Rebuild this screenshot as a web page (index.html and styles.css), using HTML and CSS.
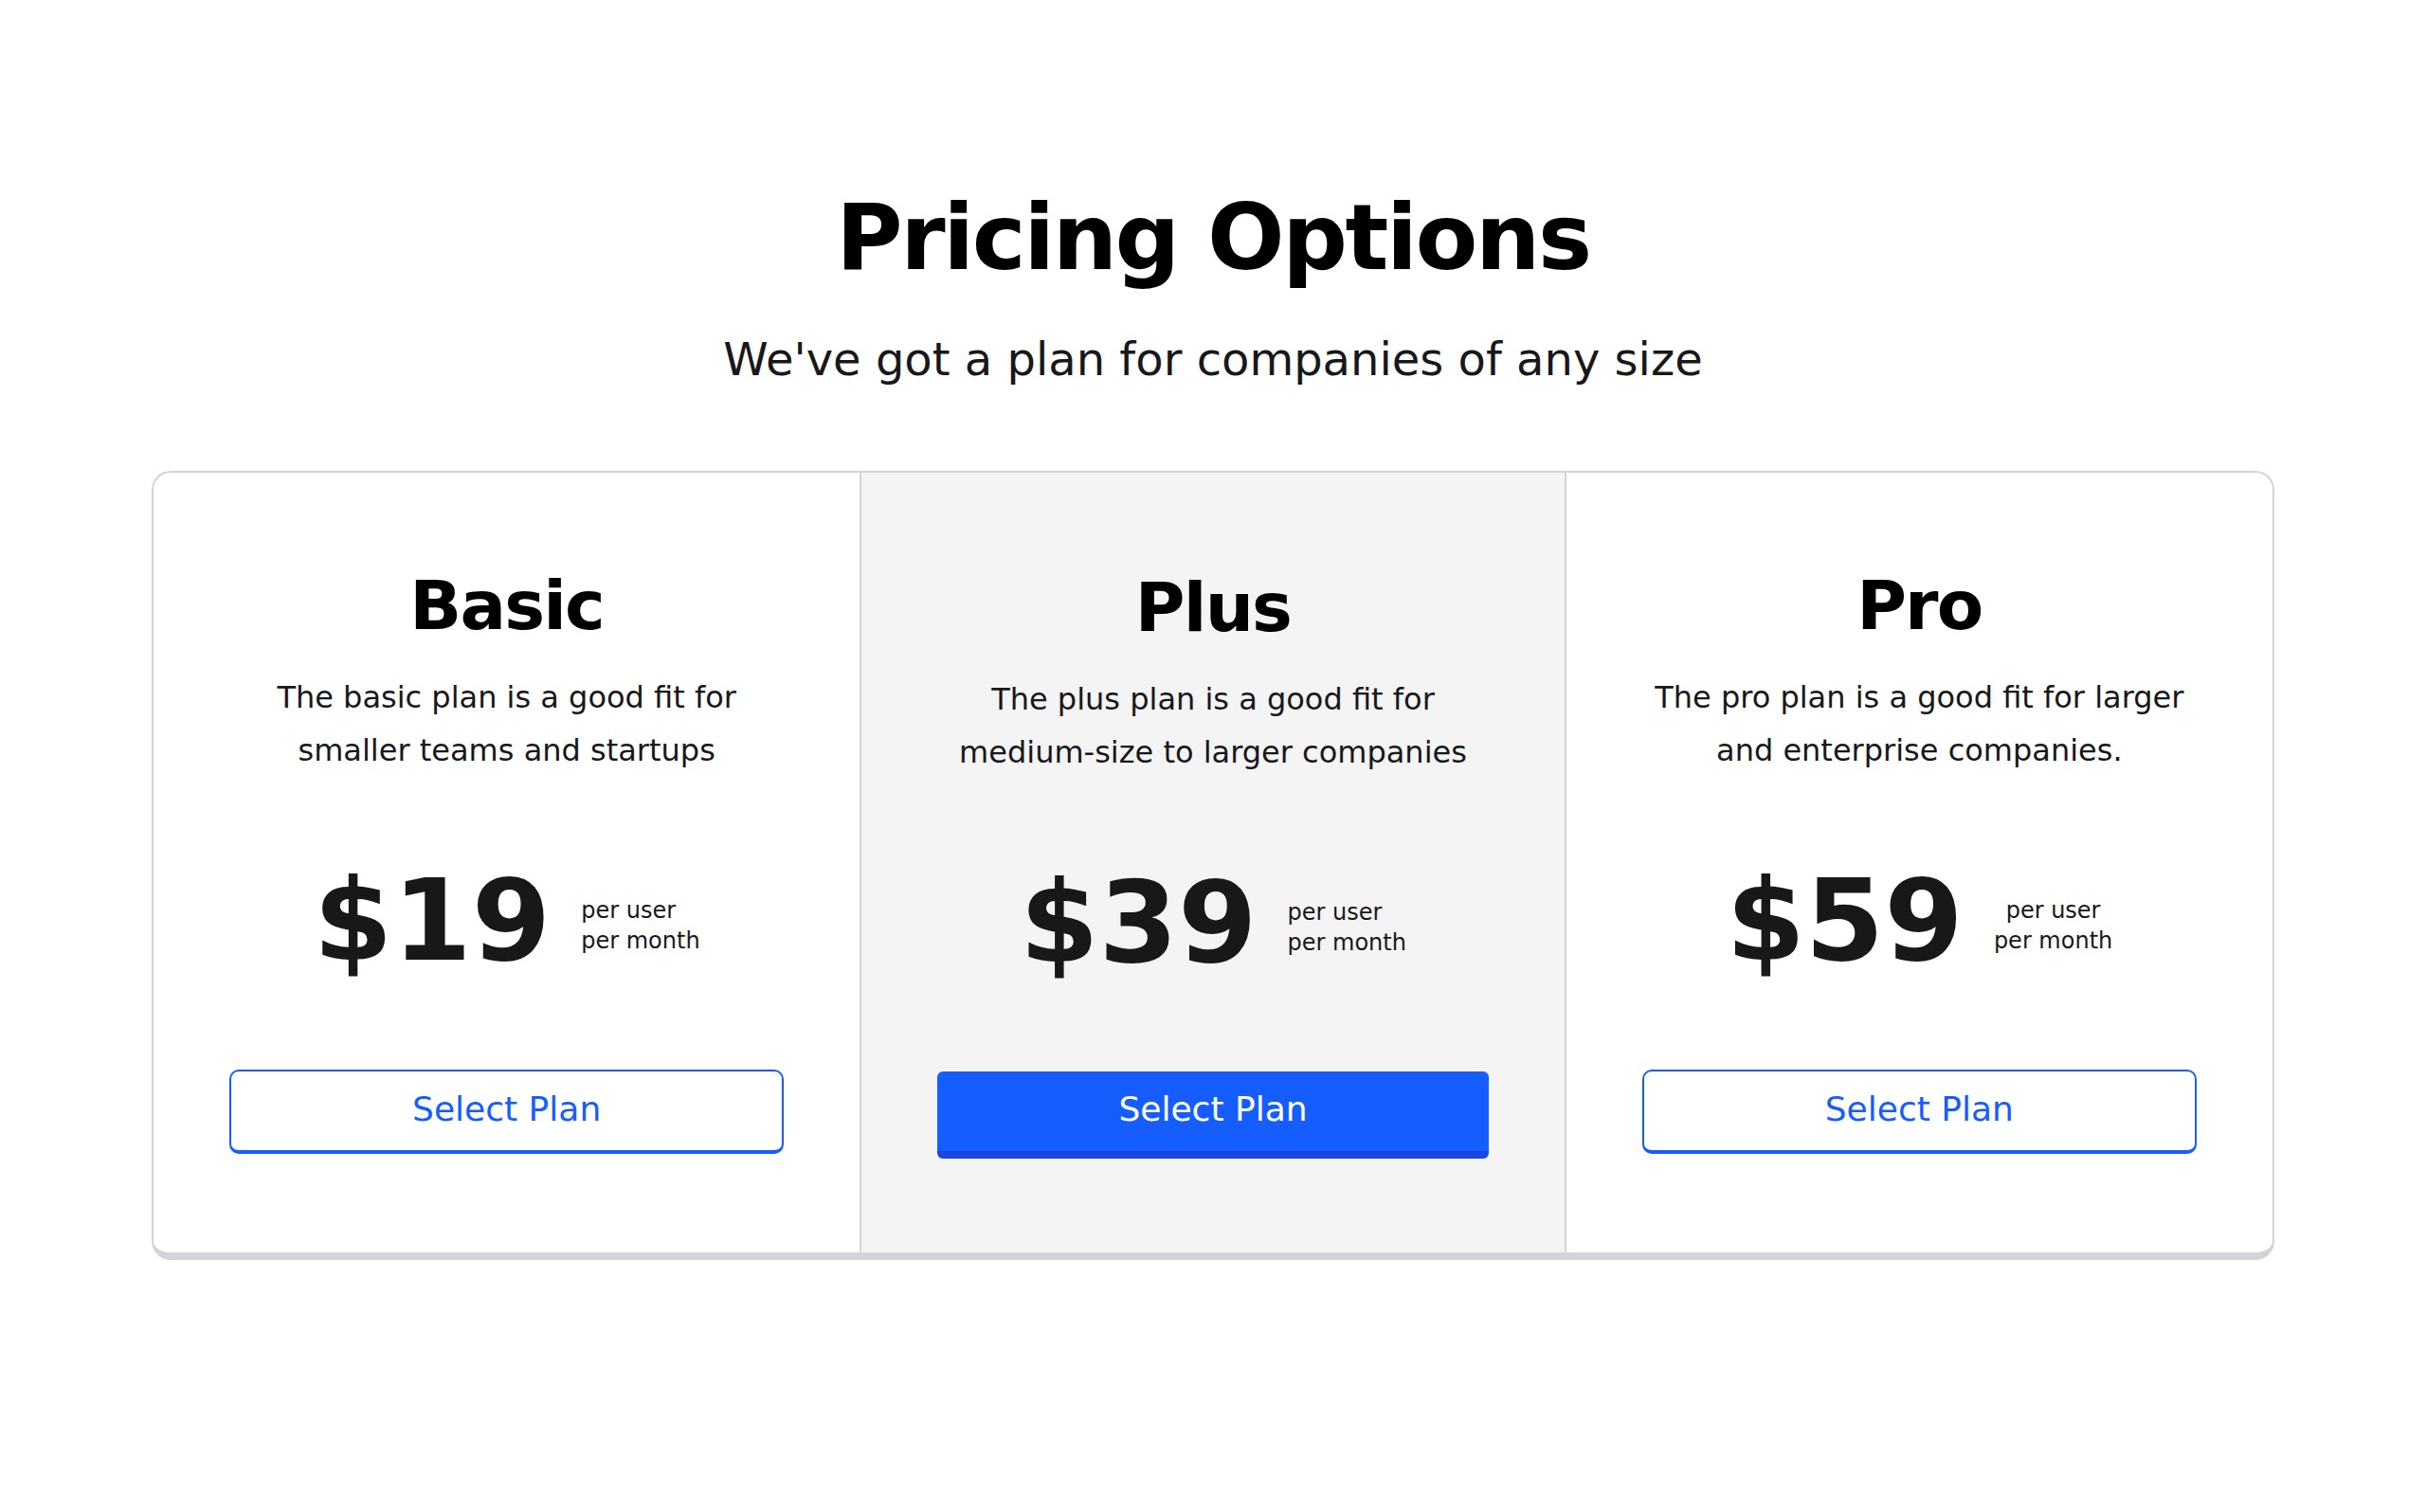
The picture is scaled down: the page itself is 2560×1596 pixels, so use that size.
FILE: index.html
```html
<!DOCTYPE html>
<html lang="en">
<head>
<meta charset="utf-8">
<title>Pricing Options</title>
<link rel="stylesheet" href="styles.css">
</head>
<body>
<main class="page">
  <h1 class="title">Pricing Options</h1>
  <p class="subtitle">We've got a plan for companies of any size</p>

  <section class="pricing">
    <div class="plan">
      <h2 class="plan-name">Basic</h2>
      <p class="plan-desc">The basic plan is a good fit for smaller teams and startups</p>
      <div class="price-row">
        <span class="price">$19</span>
        <span class="per">per user<br>per month</span>
      </div>
      <button class="btn btn-outline">Select Plan</button>
    </div>

    <div class="plan plan-featured">
      <h2 class="plan-name">Plus</h2>
      <p class="plan-desc">The plus plan is a good fit for medium-size to larger companies</p>
      <div class="price-row">
        <span class="price">$39</span>
        <span class="per">per user<br>per month</span>
      </div>
      <button class="btn btn-solid">Select Plan</button>
    </div>

    <div class="plan">
      <h2 class="plan-name">Pro</h2>
      <p class="plan-desc">The pro plan is a good fit for larger and enterprise companies.</p>
      <div class="price-row">
        <span class="price">$59</span>
        <span class="per per-center">per user<br>per month</span>
      </div>
      <button class="btn btn-outline">Select Plan</button>
    </div>
  </section>
</main>
</body>
</html>
```

FILE: styles.css
```css
* {
  box-sizing: border-box;
}

html, body {
  margin: 0;
  padding: 0;
  background: #ffffff;
}

body {
  font-family: "DejaVu Sans", "Noto Sans", sans-serif;
  color: #18181b;
}

.page {
  padding: 203px 160px 0;
}

.title {
  margin: 0;
  font-size: 96px;
  line-height: 96px;
  font-weight: 700;
  letter-spacing: -2.4px;
  text-align: center;
  color: #000000;
}

.subtitle {
  margin: 44px 0 0;
  font-size: 48px;
  line-height: 72px;
  text-align: center;
  color: #18181b;
}

.pricing {
  margin-top: 82px;
  display: grid;
  grid-template-columns: repeat(3, 1fr);
  border: 2px solid #d4d4d8;
  border-bottom-width: 8px;
  border-radius: 20px;
  background: #ffffff;
  overflow: hidden;
}

.plan {
  padding: 100px 80px 101px;
  text-align: center;
  display: flex;
  flex-direction: column;
}

.plan-featured {
  background: #f4f4f5;
  border-left: 2px solid #d4d4d8;
  border-right: 2px solid #d4d4d8;
  padding-top: 102px;
  padding-bottom: 99px;
}

.plan-name {
  margin: 0;
  font-size: 72px;
  line-height: 80px;
  font-weight: 700;
  letter-spacing: -1.8px;
  color: #000000;
}

.plan-desc {
  margin: 29px 0 0;
  font-size: 32px;
  line-height: 56px;
  color: #18181b;
}

.price-row {
  margin-top: 92px;
  display: flex;
  justify-content: center;
  align-items: center;
}

.price {
  font-size: 120px;
  line-height: 120px;
  font-weight: 700;
  color: #18181b;
}

.per {
  margin-left: 32px;
  margin-top: 10px;
  font-size: 24px;
  line-height: 32px;
  text-align: left;
  color: #18181b;
}

.per-center {
  text-align: center;
}

.btn {
  display: block;
  width: 100%;
  margin-top: 97px;
  font-family: inherit;
  font-size: 36px;
  line-height: 56px;
  cursor: pointer;
}

.btn-outline {
  background: #ffffff;
  color: #165dff;
  border: 2px solid #165dff;
  border-bottom-width: 4px;
  border-radius: 10px;
  padding: 12px 0 15px;
}

.btn-solid {
  background: #165dff;
  color: #ffffff;
  border: 0;
  border-bottom: 8px solid #1748e4;
  border-radius: 6px;
  padding: 12px 0 16px;
}
```
